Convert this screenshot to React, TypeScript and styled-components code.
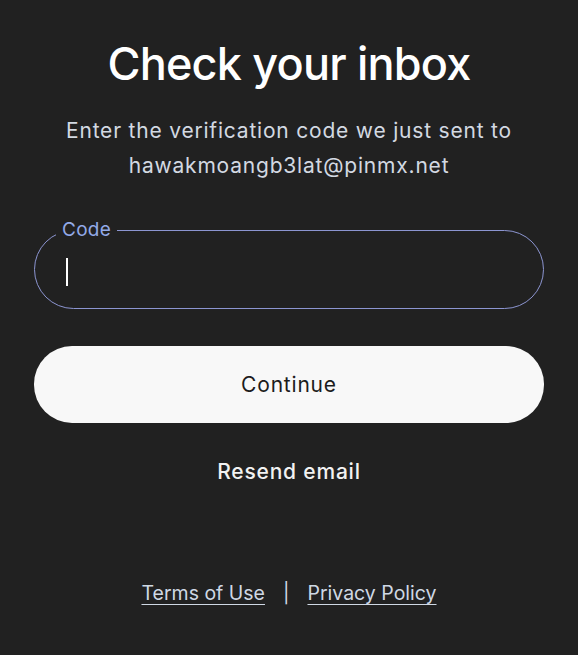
import React, { useState } from 'react'
import styled, { createGlobalStyle } from 'styled-components'

const GlobalStyle = createGlobalStyle`
  html, body {
    margin: 0;
    padding: 0;
    background: #212121;
  }
  body {
    font-family: Inter, "Noto Sans", sans-serif;
    color: #ffffff;
  }
`

function App() {
  const [code, setCode] = useState('')

  return (
    <>
      <GlobalStyle />
      <Page>
        <Title>Check your inbox</Title>
        <Subtitle>
          Enter the verification code we just sent to
          <br />
          hawakmoangb3lat@pinmx.net
        </Subtitle>
        <Field>
          <Legend>Code</Legend>
          <CodeInput
            value={code}
            onChange={(e) => setCode(e.target.value)}
            autoFocus
          />
          <Caret />
        </Field>
        <Continue type="button">Continue</Continue>
        <Resend type="button">Resend email</Resend>
        <Footer>
          <FooterLink href="#">Terms of Use</FooterLink>
          <Divider>|</Divider>
          <FooterLink href="#">Privacy Policy</FooterLink>
        </Footer>
      </Page>
    </>
  )
}

const Page = styled.div`
  width: 510px;
  margin: 0 auto;
  padding-top: 36px;
  display: flex;
  flex-direction: column;
  align-items: stretch;
`

const Title = styled.h1`
  margin: 0;
  text-align: center;
  font-size: 45px;
  font-weight: 500;
  letter-spacing: -0.8px;
  line-height: 56px;
  color: #ffffff;
`

const Subtitle = styled.p`
  margin: 21px 0 0;
  text-align: center;
  font-size: 21px;
  letter-spacing: 0.8px;
  line-height: 35px;
  color: #d3d9e2;
`

const Field = styled.fieldset`
  position: relative;
  margin: 37px 0 0;
  padding: 0 30px;
  height: 89px;
  box-sizing: border-box;
  border: 1px solid #8c95d1;
  border-radius: 40px;
  display: flex;
  align-items: center;
`

const Legend = styled.legend`
  margin-left: -9px;
  padding: 0 6px 0 6px;
  font-size: 19px;
  line-height: 20px;
  letter-spacing: 0.3px;
  color: #93aae8;
`

const CodeInput = styled.input`
  flex: 1;
  margin-top: -10px;
  background: transparent;
  border: none;
  outline: none;
  color: transparent;
  caret-color: transparent;
  font-size: 20px;
  font-family: inherit;
`

const Caret = styled.span`
  position: absolute;
  left: 31px;
  top: 18px;
  width: 2px;
  height: 28px;
  background: #ffffff;
`

const Continue = styled.button`
  margin-top: 37px;
  height: 77px;
  border: none;
  border-radius: 38px;
  background: #f8f8f8;
  color: #1c1c1c;
  font-family: inherit;
  font-size: 21px;
  letter-spacing: 0.8px;
  cursor: pointer;
`

const Resend = styled.button`
  margin: 36px auto 0;
  padding: 0;
  border: none;
  background: transparent;
  color: #f2f2f2;
  font-family: inherit;
  font-size: 21px;
  font-weight: 500;
  letter-spacing: 0.8px;
  line-height: 26px;
  cursor: pointer;
`

const Footer = styled.div`
  margin-top: 95px;
  display: flex;
  justify-content: center;
  align-items: center;
  gap: 18px;
  font-size: 19.5px;
  line-height: 26px;
`

const FooterLink = styled.a`
  color: #cfd8e4;
  text-decoration: underline;
  text-underline-offset: 4px;
`

const Divider = styled.span`
  color: #cfd8e4;
`

export default App
